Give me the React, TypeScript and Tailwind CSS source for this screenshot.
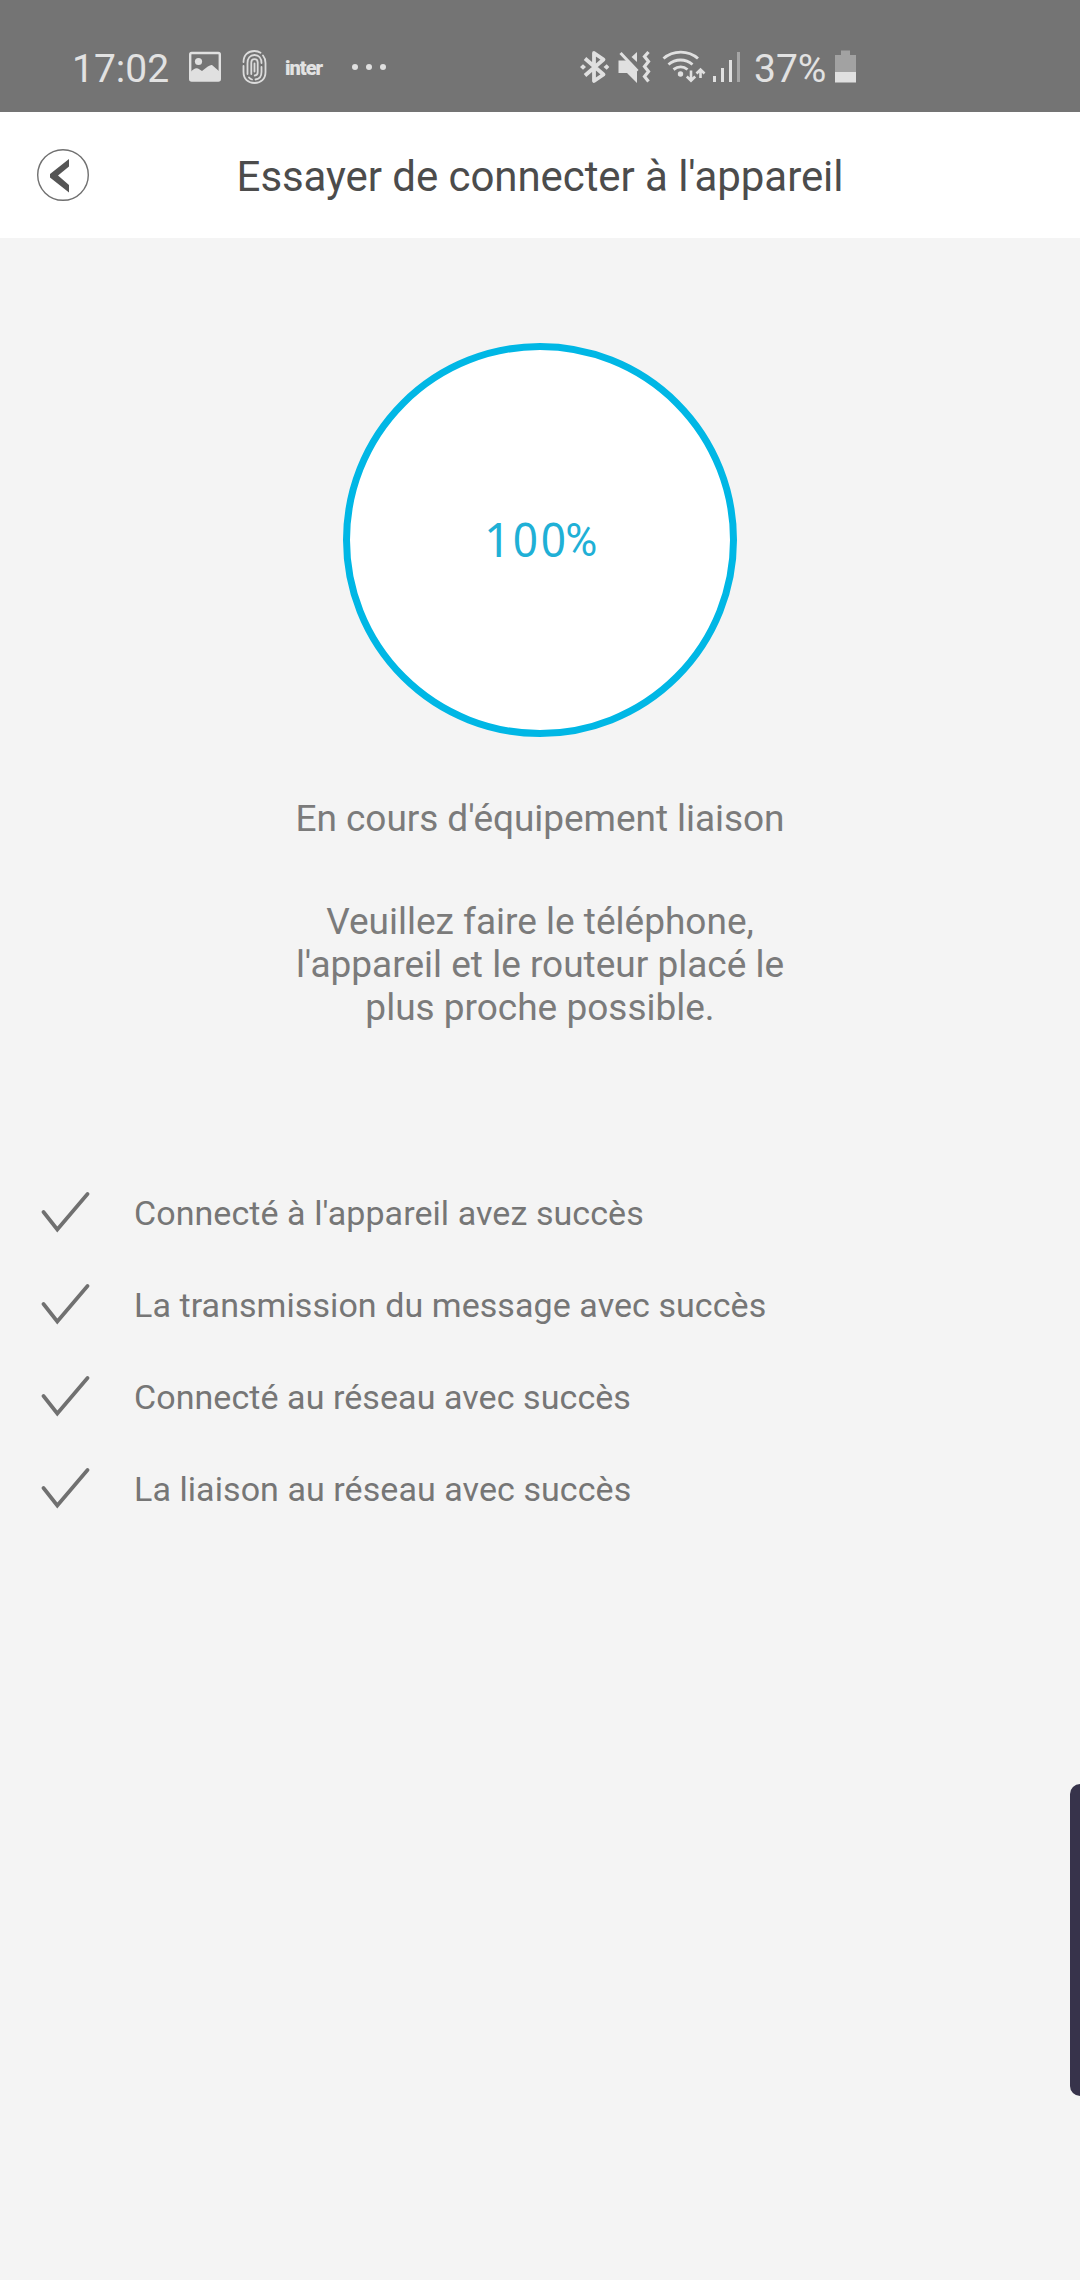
import type { ReactNode } from "react";

const steps = [
  "Connecté à l'appareil avez succès",
  "La transmission du message avec succès",
  "Connecté au réseau avec succès",
  "La liaison au réseau avec succès",
];

function ImageIcon() {
  return (
    <svg className="ml-[20px] h-[36px] w-[34px]" viewBox="188 49 34 36">
      <rect x="190.2" y="53" width="29.6" height="27.5" rx="1.5" fill="none" stroke="#e0e0e0" strokeWidth="2.4" />
      <circle cx="198.5" cy="61.5" r="3.6" fill="#e0e0e0" />
      <path d="M190 73q4-5.500 8-4.500l4 2.500q8-7 10-6l8 7v9h-30z" fill="#e0e0e0" />
    </svg>
  );
}

function FingerprintIcon() {
  return (
    <svg className="ml-[19px] h-[36px] w-[28px]" viewBox="241 49 28 36" fill="none" stroke="#dcdcdc" strokeWidth="1.8" strokeLinecap="round">
      <path d="M243.500 62C243.500 55 248 51 254.500 51c2.500 0 4.500.7 6 1.800M263 55.500c1.700 2 2.500 4 2.500 7.500v9c0 7-4.500 11-11 11s-11-4-11-11v-6" />
      <path d="M247.500 74V63c0-4.500 2.500-8 7-8s7 3.500 7 8M261.500 67v5c0 4.500-2 7-6 7.500M249 77.500c.8 1 2 1.700 3 2" />
      <path d="M251.300 74V62.500c0-4.500 6.400-4.500 6.400 0V72c0 2.500-1 3.500-3 3.500M254.500 63.500v8" />
    </svg>
  );
}

function BluetoothIcon() {
  return (
    <svg className="h-[36px] w-[32px]" viewBox="579 49 32 36">
      <path d="M585 58.500l18.500 16-9.500 6.500V53l9.500 6.500-18.500 16" fill="none" stroke="#e0e0e0" strokeWidth="3.800" strokeLinejoin="round" />
      <path d="M580 67l3-2.800 3 2.800-3 2.800zM603.500 67l3.200-2.800 2.600 2.800-2.600 2.800z" fill="#e0e0e0" />
    </svg>
  );
}

function MuteVibrateIcon() {
  return (
    <svg className="ml-[6px] h-[36px] w-[34px]" viewBox="617 49 34 36">
      <path d="M618.500 60.500h8l10.500 11v11.500l-10-10h-8.500z" fill="#e0e0e0" />
      <path d="M631.500 57l5.500-5v10z" fill="#e0e0e0" />
      <path d="M620.500 53l17 18" stroke="#e0e0e0" strokeWidth="3" />
      <path d="M648.500 52l-4 4.500 4 5-4 5 4 5-4 5 4 5" fill="none" stroke="#e0e0e0" strokeWidth="3.200" />
    </svg>
  );
}

function WifiIcon() {
  return (
    <svg className="ml-[11px] h-[36px] w-[44px]" viewBox="662 49 44 36" fill="none" stroke="#e0e0e0" strokeWidth="2.900">
      <path d="M663.500 58.500c9.500-8.500 25-8.500 34.500 0M668.500 64.500c7-6 17-6 24 0M673.500 69.500c4.500-3.300 10-3.300 14 0" />
      <circle cx="680.500" cy="74" r="2.700" fill="#e0e0e0" stroke="none" />
      <path d="M691 70.500v10M686.800 76.500l4.200 4.200 4.200-4.200M700.500 78v-8M696.500 73.500l4-4 4 4" strokeWidth="2.600" />
    </svg>
  );
}

function SignalIcon() {
  return (
    <svg className="ml-[6px] h-[36px] w-[30px]" viewBox="712 49 30 36" fill="#e0e0e0">
      <rect x="713" y="76" width="3" height="6" />
      <rect x="721" y="68" width="3" height="14" />
      <rect x="729" y="60" width="3" height="22" />
      <rect x="737" y="52" width="3" height="30" fill="#a5a5a5" />
    </svg>
  );
}

function BatteryIcon() {
  return (
    <svg className="absolute top-[49px] left-[834px] h-[36px] w-[24px]" viewBox="834 49 24 36">
      <path d="M841 50.500h9V55h6v18h-21V55h6z" fill="#a2a2a2" />
      <path d="M835 72h21v10.500h-21z" fill="#e0e0e0" />
    </svg>
  );
}

function StatusText({ children, className }: { children: ReactNode; className: string }) {
  return <span className={`whitespace-nowrap text-[#e2e2e2] ${className}`}>{children}</span>;
}

function CheckIcon() {
  return (
    <svg className="h-[44px] w-[50px]" viewBox="40 1190 50 44" fill="none">
      <path d="M43.500 1212L57.300 1229.500 87.500 1194" stroke="#707070" strokeWidth="3.700" strokeLinecap="round" />
    </svg>
  );
}

export default function App() {
  return (
    <div className="relative h-[2280px] w-[1080px] overflow-hidden bg-[#f4f4f4] font-['Roboto',sans-serif]">
      <div className="relative flex h-[112px] bg-[#747474] pt-[49px]">
        <StatusText className="ml-[72px] w-[96px] text-[39px] leading-[40px]">17:02</StatusText>
        <ImageIcon />
        <FingerprintIcon />
        <StatusText className="ml-[16px] w-[40px] pt-[7px] text-[20px] leading-[25px] font-black tracking-[-1px]">inter</StatusText>
        <div className="mt-[15px] ml-[27px] flex gap-[8px]">
          <i className="size-[6px] rounded-full bg-[#e0e0e0]" />
          <i className="size-[6px] rounded-full bg-[#e0e0e0]" />
          <i className="size-[6px] rounded-full bg-[#e0e0e0]" />
        </div>
        <div className="ml-[193px] flex">
          <BluetoothIcon />
          <MuteVibrateIcon />
          <WifiIcon />
          <SignalIcon />
          <StatusText className="ml-[12px] text-[39px] leading-[40px]">37%</StatusText>
        </div>
        <BatteryIcon />
      </div>

      <header className="grid h-[126px] grid-cols-[100px_1fr_100px] bg-white">
        <svg className="mt-[36px] ml-[36px] h-[54px] w-[54px]" viewBox="36 148 54 54">
          <circle cx="63" cy="175" r="25.300" fill="none" stroke="#707070" strokeWidth="1.400" />
          <path d="M69 159v7.500l-11 9 11 9.500v7.500l-19-15v-3.500z" fill="#555" />
        </svg>
        <h1 className="pt-[40px] text-center text-[42px] leading-[50px] tracking-[-0.07px] whitespace-nowrap text-[#4c4c4c]">
          Essayer de connecter à l'appareil
        </h1>
      </header>

      <main>
        <div className="mx-auto mt-[105px] flex size-[394px] items-center justify-center rounded-full border-[7px] border-[#00b7e5] bg-white">
          <div className="mb-[2px] flex font-['Noto_Sans',sans-serif] text-[47px] leading-[60px] text-[#1fb0d6]">
            <span className="w-[28px] pr-[3px] text-center">1</span>
            <span className="w-[28px] scale-x-[0.94] pr-[2px] text-center">0</span>
            <span className="w-[28px] scale-x-[0.94] pr-[2px] text-center">0</span>
            <span className="flex w-[28px] justify-center pt-px pr-[2px] font-['Roboto',sans-serif]">
              <span className="scale-x-[0.93]">%</span>
            </span>
          </div>
        </div>

        <div className="mt-[60px] text-center text-[37px] leading-[43px] whitespace-nowrap text-[#7b7b7b]">
          <p className="tracking-[-0.06px]">En cours d'équipement liaison</p>
          <p className="mt-[60px]">
            Veuillez faire le téléphone,
            <br />
            l'appareil et le routeur placé le
            <br />
            plus proche possible.
          </p>
        </div>

        <ul className="mt-[137px] ml-[40px] text-[34px] tracking-[0.07px] whitespace-nowrap text-[#767676]">
          {steps.map((step) => (
            <li key={step} className="flex h-[92px] items-center gap-[44px]">
              <CheckIcon />
              <span className="pt-[2px]">{step}</span>
            </li>
          ))}
        </ul>
      </main>

      <div className="absolute top-[1784px] right-0 h-[312px] w-[10px] rounded-l-[12px] bg-[#37334b]" />
    </div>
  );
}
